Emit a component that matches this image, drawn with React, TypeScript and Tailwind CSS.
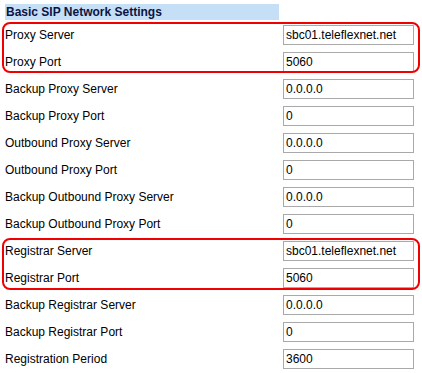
import React from 'react';

const rows: { label: string; value: string }[] = [
  { label: 'Proxy Server', value: 'sbc01.teleflexnet.net' },
  { label: 'Proxy Port', value: '5060' },
  { label: 'Backup Proxy Server', value: '0.0.0.0' },
  { label: 'Backup Proxy Port', value: '0' },
  { label: 'Outbound Proxy Server', value: '0.0.0.0' },
  { label: 'Outbound Proxy Port', value: '0' },
  { label: 'Backup Outbound Proxy Server', value: '0.0.0.0' },
  { label: 'Backup Outbound Proxy Port', value: '0' },
  { label: 'Registrar Server', value: 'sbc01.teleflexnet.net' },
  { label: 'Registrar Port', value: '5060' },
  { label: 'Backup Registrar Server', value: '0.0.0.0' },
  { label: 'Backup Registrar Port', value: '0' },
  { label: 'Registration Period', value: '3600' },
];

export default function App() {
  return (
    <div className="relative w-[422px] h-[373px] bg-white font-['Liberation_Sans',Arial,sans-serif] text-[12px] text-black">
      <div className="pt-[4px] pl-[5px]">
        <div className="w-[274px] h-[16px] bg-[#c5dff7] pl-[1px] font-bold leading-[16px] text-[#0c1445]">
          Basic SIP Network Settings
        </div>
        <div className="mt-[1px]">
          {rows.map((r) => (
            <div key={r.label} className="flex items-center h-[27px]">
              <div className="w-[278px]">{r.label}</div>
              <input
                readOnly
                value={r.value}
                className="w-[131px] h-[20px] border border-[#a9a9a9] px-[2px] text-[12px] leading-[18px] outline-none"
              />
            </div>
          ))}
        </div>
      </div>

      {/* red annotation boxes */}
      <div className="absolute left-[2px] top-[22px] w-[418px] h-[51px] border-2 border-[#f00000] rounded-[8px]" />
      <div className="absolute left-[2px] top-[238px] w-[418px] h-[52px] border-2 border-[#f00000] rounded-[8px]" />
    </div>
  );
}
